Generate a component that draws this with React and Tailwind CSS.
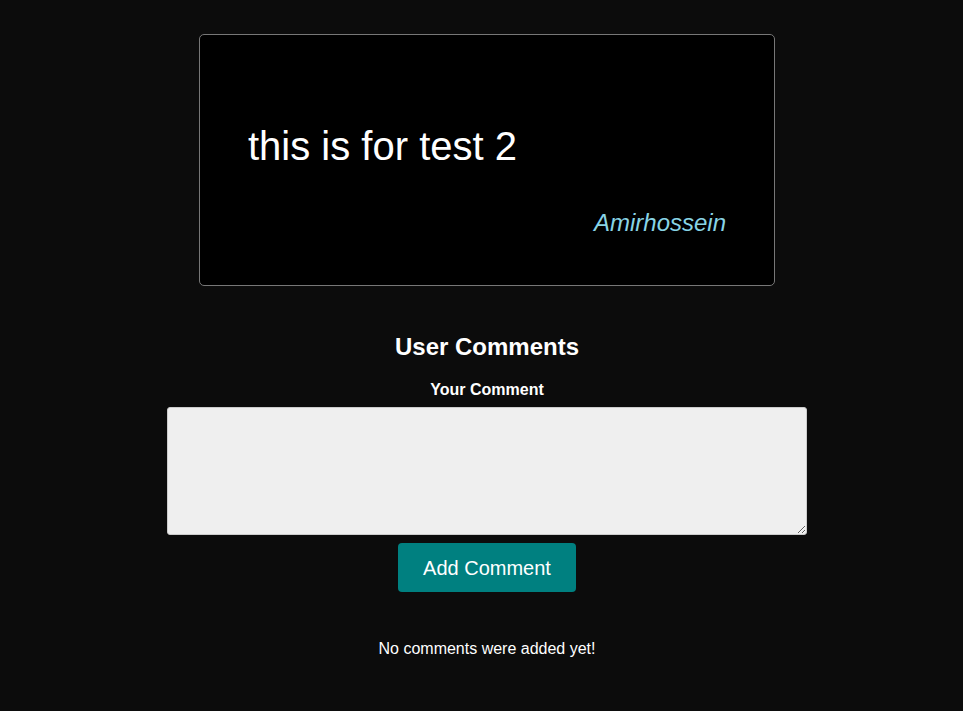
export default function App() {
  return (
    <div className="min-h-[711px] bg-[#0c0c0c] text-white pl-[11px] pt-[34px] flex flex-col items-center" style={{ fontFamily: '"Liberation Sans", Arial, sans-serif' }}>
      <div className="w-[576px] bg-black border border-[#777] rounded-[5px] px-[48px] pt-[88px] pb-[48px]">
        <p className="text-[40px] leading-[46px] m-0">this is for test 2</p>
        <p className="mt-[40px] text-[24px] leading-[28px] italic text-right text-[#88d4e6]">Amirhossein</p>
      </div>
      <h2 className="mt-[47px] text-[24px] leading-[28px] font-bold">User Comments</h2>
      <label className="mt-[20px] text-[16px] leading-[18px] font-bold">Your Comment</label>
      <textarea className="mt-[8px] w-[640px] h-[128px] bg-[#efefef] border border-[#ccc] rounded-[3px] text-black p-2" />
      <button className="mt-[8px] w-[178px] h-[49px] bg-[#008080] rounded-[4px] text-[20px] text-white">Add Comment</button>
      <p className="mt-[48px] text-[16px] leading-[18px]">No comments were added yet!</p>
    </div>
  );
}
